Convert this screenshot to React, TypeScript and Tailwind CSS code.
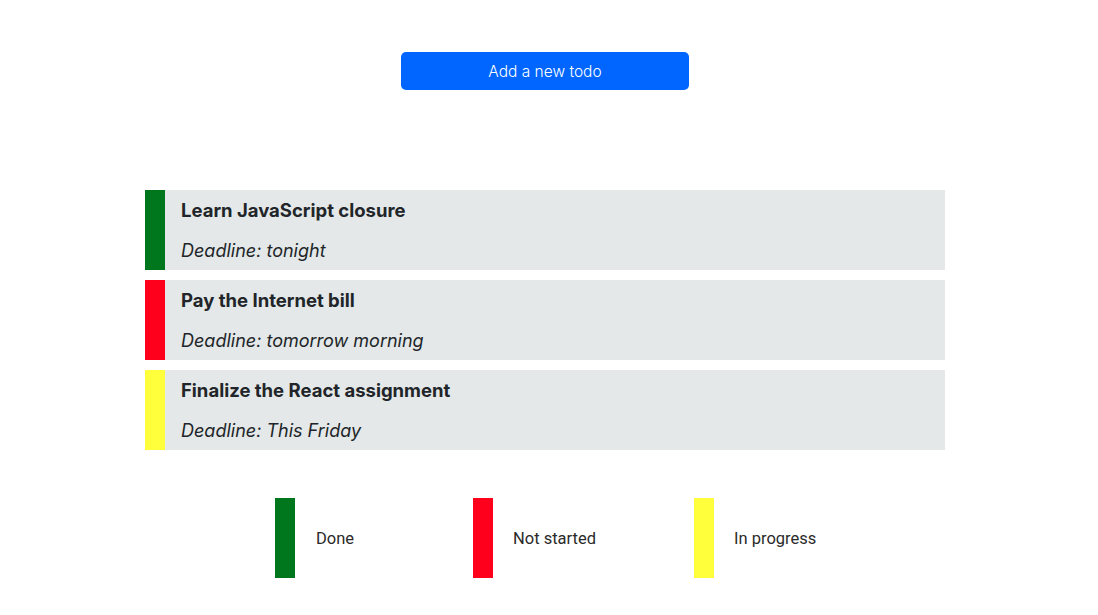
import React from 'react';

interface Todo {
  title: string;
  deadline: string;
  status: 'done' | 'todo' | 'progress';
}

const todos: Todo[] = [
  { title: 'Learn JavaScript closure', deadline: 'tonight', status: 'done' },
  { title: 'Pay the Internet bill', deadline: 'tomorrow morning', status: 'todo' },
  { title: 'Finalize the React assignment', deadline: 'This Friday', status: 'progress' },
];

const barColor = {
  done: 'bg-[#00761d]',
  todo: 'bg-[#ff001c]',
  progress: 'bg-[#ffff3b]',
};

export default function App() {
  return (
    <div className="w-[1090px] min-h-[615px] bg-white text-[#212529] font-['Inter','Noto_Sans',sans-serif]">
      <div className="flex justify-center pt-[52px]">
        <button className="w-[288px] h-[38px] pt-[1px] rounded-[5px] bg-[#0066ff] text-white text-[15.5px] font-light">
          Add a new todo
        </button>
      </div>

      {/* Todo list */}
      <div className="w-[800px] mx-auto mt-[100px] flex flex-col gap-[10px]">
        {todos.map((t) => (
          <div key={t.title} className="flex h-[80px] bg-[#e4e8e8]">
            <div className={`w-[20px] shrink-0 ${barColor[t.status]}`} />
            <div className="pl-4 flex flex-col">
              <div className="text-[18.5px] font-bold leading-[22px] mt-[9px]">{t.title}</div>
              <div className="text-[18px] italic leading-[22px] mt-[19px]">Deadline: {t.deadline}</div>
            </div>
          </div>
        ))}
      </div>

      {/* Legend */}
      <div className="flex pl-[275px] mt-[48px] text-[16.5px] font-['Roboto',sans-serif] text-[#2a2a2a]">
        <div className="flex items-center w-[198px]">
          <div className="w-[20px] h-[80px] bg-[#00761d]" />
          <span className="ml-[21px] pt-[3px]">Done</span>
        </div>
        <div className="flex items-center w-[221px]">
          <div className="w-[20px] h-[80px] bg-[#ff001c]" />
          <span className="ml-[20px] pt-[3px]">Not started</span>
        </div>
        <div className="flex items-center">
          <div className="w-[20px] h-[80px] bg-[#ffff3b]" />
          <span className="ml-[20px] pt-[3px]">In progress</span>
        </div>
      </div>
    </div>
  );
}
